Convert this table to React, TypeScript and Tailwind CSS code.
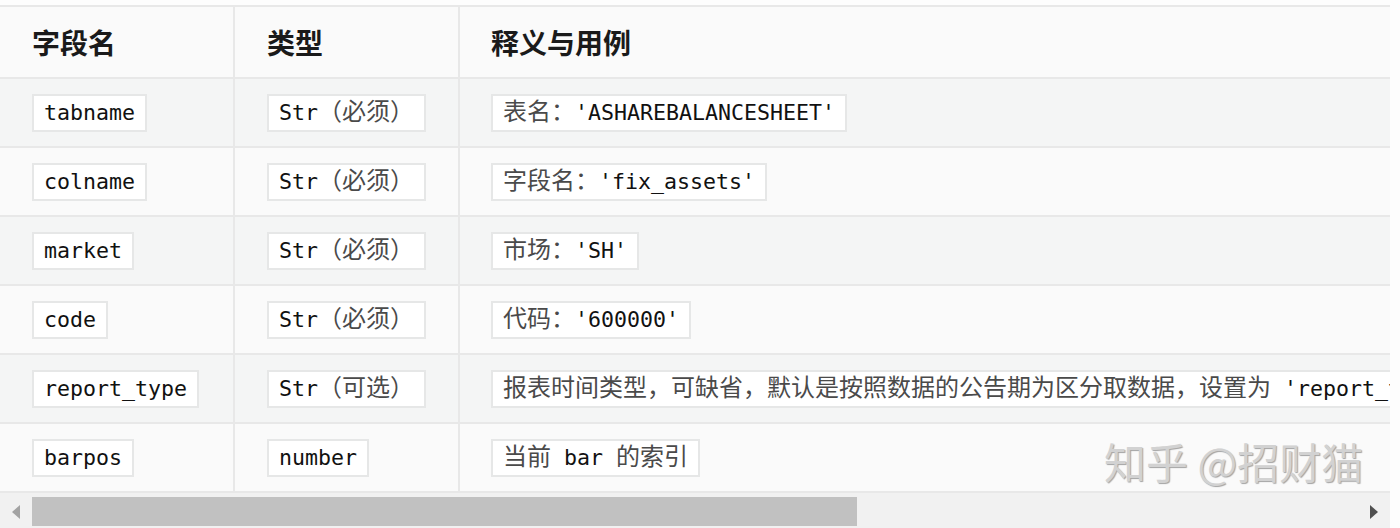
import { ReactNode } from "react";

type Part = { t: string; zh?: boolean };

type RowType = {
    name: string;
    kind: Part[];
    desc: Part[];
};

const rows: RowType[] = [
    {
        name: "tabname",
        kind: [{ t: "Str" }, { t: "（必须）", zh: true }],
        desc: [{ t: "表名：", zh: true }, { t: "'ASHAREBALANCESHEET'" }],
    },
    {
        name: "colname",
        kind: [{ t: "Str" }, { t: "（必须）", zh: true }],
        desc: [{ t: "字段名：", zh: true }, { t: "'fix_assets'" }],
    },
    {
        name: "market",
        kind: [{ t: "Str" }, { t: "（必须）", zh: true }],
        desc: [{ t: "市场：", zh: true }, { t: "'SH'" }],
    },
    {
        name: "code",
        kind: [{ t: "Str" }, { t: "（必须）", zh: true }],
        desc: [{ t: "代码：", zh: true }, { t: "'600000'" }],
    },
    {
        name: "report_type",
        kind: [{ t: "Str" }, { t: "（可选）", zh: true }],
        desc: [
            { t: "报表时间类型，可缺省，默认是按照数据的公告期为区分取数据，设置为", zh: true },
            { t: " 'report_type'" },
        ],
    },
    {
        name: "barpos",
        kind: [{ t: "number" }],
        desc: [{ t: "当前", zh: true }, { t: " bar " }, { t: "的索引", zh: true }],
    },
];

const Code = ({ parts }: { parts: Part[] }) => {
    return (
        <span className="inline-block bg-white border-2 border-[#e6e7e7] px-[10px] leading-[34px] whitespace-pre text-[21.6px] text-[#111] font-['DejaVu_Sans_Mono','Liberation_Mono',monospace]">
            {parts.map((p, i) =>
                p.zh ? (
                    <span
                        key={i}
                        className="text-[24px] leading-none text-[#4a4a4a] font-['Noto_Sans_CJK_SC',sans-serif]"
                    >
                        {p.t}
                    </span>
                ) : (
                    <span key={i}>{p.t}</span>
                )
            )}
        </span>
    );
};

const Cell = ({ children, last }: { children: ReactNode; last?: boolean }) => (
    <div
        className={
            last
                ? "flex items-center pl-[31px]"
                : "flex items-center pl-[32px] border-r-2 border-[#e8e8e8]"
        }
    >
        {children}
    </div>
);

export default function App() {
    return (
        <div className="relative w-[1400px] h-[528px] bg-[#fdfdfd] overflow-hidden font-['Noto_Sans_CJK_SC',sans-serif]">
            <div className="w-[1390px] pt-[5px]">
                {/* table */}
                <div className="overflow-hidden">
                    <div className="w-[1700px] border-t-2 border-[#e8e8e8]">
                        {/* header */}
                        <div className="grid grid-cols-[235px_225px_1fr] h-[72px] bg-[#fafafa] border-b-2 border-[#e8e8e8] text-[28px] font-bold text-[#1a1a1a]">
                            <Cell>字段名</Cell>
                            <Cell>类型</Cell>
                            <Cell last>释义与用例</Cell>
                        </div>
                        {rows.map((r, i) => (
                            <div
                                key={r.name}
                                className={
                                    i % 2 === 0
                                        ? "grid grid-cols-[235px_225px_1fr] h-[69px] bg-[#f4f5f5] border-b-2 border-[#e8e8e8]"
                                        : "grid grid-cols-[235px_225px_1fr] h-[69px] bg-[#fafafa] border-b-2 border-[#e8e8e8]"
                                }
                            >
                                <Cell>
                                    <Code parts={[{ t: r.name }]} />
                                </Cell>
                                <Cell>
                                    <Code parts={r.kind} />
                                </Cell>
                                <Cell last>
                                    <Code parts={r.desc} />
                                </Cell>
                            </div>
                        ))}
                    </div>
                </div>

                {/* scrollbar */}
                <div className="flex items-center h-[37px] bg-[#f1f1f1]">
                    <div className="w-[32px] flex justify-center">
                        <svg width="8" height="14" viewBox="0 0 8 14">
                            <path d="M8 0 L0 7 L8 14 Z" fill="#a3a3a3" />
                        </svg>
                    </div>
                    <div className="w-[825px] h-[29px] bg-[#c1c1c1]" />
                    <div className="flex-1" />
                    <div className="w-[32px] flex justify-center">
                        <svg width="8" height="14" viewBox="0 0 8 14">
                            <path d="M0 0 L8 7 L0 14 Z" fill="#505050" />
                        </svg>
                    </div>
                </div>
            </div>

            {/* watermark */}
            <div className="absolute left-[1104px] top-[440px] text-[42px] leading-none text-[#d2d2d2] [text-shadow:1px_1px_1px_rgba(0,0,0,0.35)] font-['Noto_Sans_CJK_SC',sans-serif]">
                知乎 @招财猫
            </div>
        </div>
    );
}
